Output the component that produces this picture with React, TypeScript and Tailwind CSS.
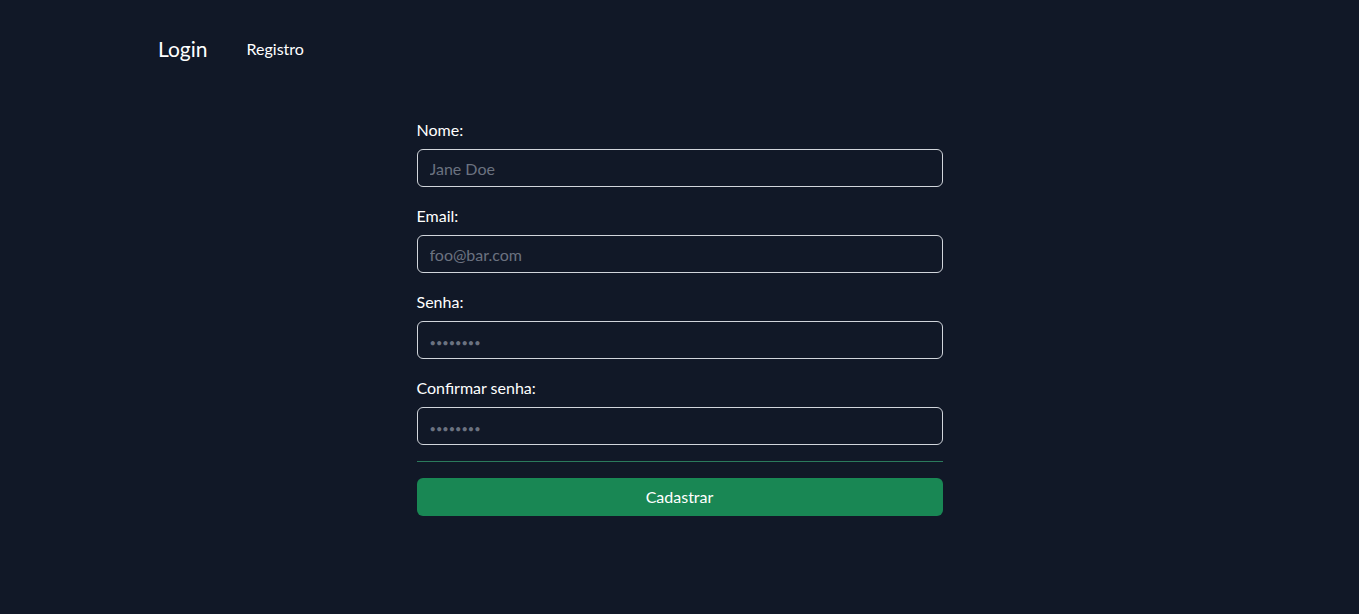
import type { ReactNode } from "react";

const font = { fontFamily: "'Segoe UI', Lato, 'Noto Sans', sans-serif" };

function Field({ label, children }: { label: string; children: ReactNode }) {
  return (
    <div className="mb-[17px]">
      <label className="mb-[7px] block text-base leading-6 text-white">{label}</label>
      {children}
    </div>
  );
}

const inputClass =
  "block h-[38px] w-full rounded-md border border-[#d1d5db] bg-[#111827] px-3 text-base text-white outline-none placeholder:text-[#6b7280]";

const passClass = inputClass + " placeholder:text-[11px]";

export default function App() {
  return (
    <div className="min-h-screen bg-[#111827] text-white" style={font}>
      <nav className="flex items-center gap-[39px] pl-[158px] pt-[35px]">
        <a className="text-[21px] leading-7 text-white">Login</a>
        <a className="text-base leading-7 text-white">Registro</a>
      </nav>

      <form className="mx-auto mt-[55px] w-[526px]" onSubmit={(e) => e.preventDefault()}>
        <Field label="Nome:">
          <input type="text" placeholder="Jane Doe" className={inputClass} />
        </Field>
        <Field label="Email:">
          <input type="email" placeholder="foo@bar.com" className={inputClass} />
        </Field>
        <Field label="Senha:">
          <input type="password" placeholder="••••••••" className={passClass} />
        </Field>
        <div>
          <label className="mb-[7px] block text-base leading-6 text-white">Confirmar senha:</label>
          <input type="password" placeholder="••••••••" className={passClass} />
        </div>

        <hr className="my-4 border-0 border-t border-[#2b7a5c]" />

        <button
          type="submit"
          className="h-[38px] w-full rounded-md bg-[#198754] text-base text-white"
        >
          Cadastrar
        </button>
      </form>
    </div>
  );
}
